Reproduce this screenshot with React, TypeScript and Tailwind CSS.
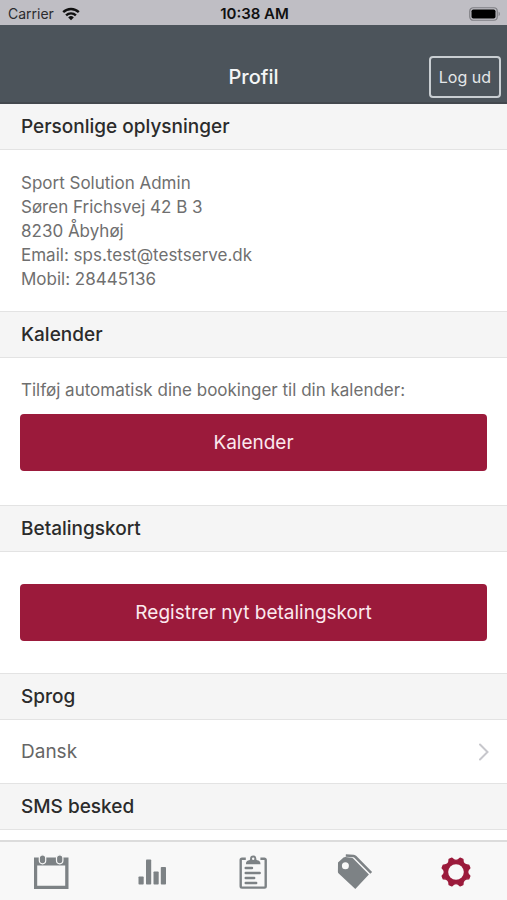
import type { ReactNode } from "react";

const toothTips = Array.from({ length: 8 }, (_, i) => 22.5 + i * 45);

function polar(radius: number, degrees: number) {
  const a = (degrees * Math.PI) / 180;
  return `${(16 + radius * Math.cos(a)).toFixed(2)} ${(16 + radius * Math.sin(a)).toFixed(2)}`;
}

const gearOutline =
  toothTips
    .map((t, i) => `${i === 0 ? "M" : "L"}${polar(14.4, t - 6)}L${polar(14.4, t + 6)}Q${polar(9.4, t + 22.5)} ${polar(14.4, t + 39)}`)
    .join("") + "Z";

function WifiIcon() {
  return (
    <svg width="18" height="14" viewBox="0 0 18 14" fill="none" stroke="#111" strokeWidth="2.4" aria-hidden="true">
      <path d="M1.2 5.2a11.2 11.2 0 0 1 15.6 0" />
      <path d="M4.1 8.4a7 7 0 0 1 9.8 0" />
      <path d="M9 13.2 6.2 10.4a4 4 0 0 1 5.6 0Z" fill="#111" stroke="none" />
    </svg>
  );
}

function BatteryIcon() {
  return (
    <svg width="32" height="14" viewBox="0 0 32 14" aria-hidden="true">
      <rect x="0.75" y="0.75" width="27.5" height="12.5" rx="3.5" fill="none" stroke="#7f7f84" strokeWidth="1.2" />
      <rect x="2.5" y="2.4" width="24" height="9.2" rx="1.8" fill="#000" />
      <path d="M29.6 4.8c1.6.5 1.6 3.9 0 4.4Z" fill="#7f7f84" />
    </svg>
  );
}

function CalendarIcon() {
  return (
    <svg width="36" height="36" viewBox="0 0 36 36" aria-hidden="true">
      <path fillRule="evenodd" d="M1 3.5h34.5v31.5H1ZM4.2 11.500v20.300h28V11.500Z" fill="#7d8285" />
      <rect x="6.3" y="0.8" width="6.4" height="9" rx="3.2" fill="#7d8285" stroke="#f8f8f8" strokeWidth="1.2" />
      <rect x="23.5" y="0.8" width="6.4" height="9" rx="3.2" fill="#7d8285" stroke="#f8f8f8" strokeWidth="1.2" />
    </svg>
  );
}

function BarsIcon() {
  return (
    <svg width="36" height="36" viewBox="0 0 36 36" fill="#7d8285" aria-hidden="true">
      <rect x="4.5" y="22.5" width="5.2" height="8" rx="0.8" />
      <rect x="12" y="5.5" width="5.2" height="25" rx="0.8" />
      <rect x="19.5" y="17.5" width="5.2" height="13" rx="0.8" />
      <rect x="26.8" y="13" width="5.2" height="17.5" rx="0.8" />
    </svg>
  );
}

function ClipboardIcon() {
  return (
    <svg width="36" height="36" viewBox="0 0 36 36" fill="none" stroke="#7d8285" aria-hidden="true">
      <path d="M10.800 4.800H7a1.300 1.300 0 0 0-1.300 1.300V32.300a1.300 1.300 0 0 0 1.300 1.300h22.400a1.300 1.300 0 0 0 1.300-1.300V6.100a1.300 1.300 0 0 0-1.300-1.300H25.400" strokeWidth="2.400" />
      <path fillRule="evenodd" d="M10.900 10.200c0-2.900 1.600-3.500 3.200-3.900.8-.2 1-.9 1-1.800a3.100 3.100 0 0 1 6.200 0c0 .9.200 1.600 1 1.800 1.600.4 3.200 1 3.200 3.900ZM18.200 3.600a1.200 1.200 0 1 0 0 2.400 1.200 1.200 0 0 0 0-2.400Z" fill="#7d8285" stroke="none" />
      <path d="M10.700 14h6.300M10.700 19h14M10.700 24h8.500M10.700 29h10.500" strokeWidth="2.400" strokeLinecap="round" />
    </svg>
  );
}

function TagsIcon() {
  return (
    <svg width="36" height="36" viewBox="0 0 36 36" aria-hidden="true">
      <path fillRule="evenodd" d="M1 8.500 6.500 3.600Q7.300 3 8.300 3L14.500 3.700Q15.600 3.900 16.400 4.700L31.900 20.600 18.300 35 1.700 19.600Q.9 18.800.9 17.800ZM8.400 8.300a3.500 3.500 0 1 0 0 7 3.500 3.500 0 0 0 0-7Z" fill="#7d8285" />
      <path d="M8.800 1.400 16.600 2Q17.700 2.200 18.500 3L34.200 18.800" fill="none" stroke="#7d8285" strokeWidth="2.500" />
    </svg>
  );
}

function GearIcon() {
  return (
    <svg width="32" height="32" viewBox="0 0 32 32" aria-hidden="true">
      <path d={gearOutline} fill="#9b1a3b" stroke="#9b1a3b" strokeWidth="1.4" strokeLinejoin="round" />
      <circle cx="16" cy="16" r="7.8" fill="#f8f8f8" />
    </svg>
  );
}

function Section({ title, children }: { title: string; children?: ReactNode }) {
  return (
    <section className="border-t border-[#e3e3e3] first:border-t-0">
      <h2 className="flex h-[46px] items-center border-b border-[#e3e3e3] bg-[#f5f5f5] px-[21px] text-[19px] leading-6 font-medium text-[#2b2b2b]">
        {title}
      </h2>
      {children}
    </section>
  );
}

function PrimaryButton({ children }: { children: ReactNode }) {
  return (
    <button type="button" className="block h-[57px] w-full rounded bg-[#9b1a3b] text-[19px] leading-6 text-[#fbe9ee]">
      {children}
    </button>
  );
}

const tabs = [
  { label: "Kalender", icon: <CalendarIcon /> },
  { label: "Statistik", icon: <BarsIcon /> },
  { label: "Bookinger", icon: <ClipboardIcon /> },
  { label: "Tilbud", icon: <TagsIcon /> },
  { label: "Profil", icon: <GearIcon /> },
];

export default function App() {
  return (
    <div className="flex h-screen flex-col bg-white font-['Inter','Liberation_Sans',sans-serif] text-[#6f6f6f]">
      <div className="grid h-[25px] shrink-0 grid-cols-[1fr_auto_1fr] items-center bg-[#bfbec4] pt-0.5 pr-1.5 pl-2 text-sm leading-5 text-[#2b2b2e]">
        <div className="flex items-center gap-2">
          <span>Carrier</span>
          <WifiIcon />
        </div>
        <time className="text-[15px] font-semibold text-[#111]">10:38 AM</time>
        <div className="flex justify-end">
          <BatteryIcon />
        </div>
      </div>

      <header className="grid h-[79px] shrink-0 grid-cols-[1fr_auto_1fr] items-center border-b-2 border-[#43484e] bg-[#4c545b] px-1.5 pt-[26px]">
        <h1 className="col-start-2 text-xl leading-6 font-medium text-[#f4f6f7]">Profil</h1>
        <button type="button" className="h-[42px] justify-self-end rounded border-2 border-[#c9ced2] px-2 text-base leading-5 text-[#e4e7e9]">
          Log ud
        </button>
      </header>

      <main className="min-h-0 flex-1 overflow-hidden">
        <Section title="Personlige oplysninger">
          <address className="px-[21px] pt-[21px] pb-5 text-[17px] leading-6 not-italic">
            <p>Sport Solution Admin</p>
            <p>Søren Frichsvej 42 B 3</p>
            <p>8230 Åbyhøj</p>
            <p>Email: sps.test@testserve.dk</p>
            <p>Mobil: 28445136</p>
          </address>
        </Section>

        <Section title="Kalender">
          <div className="px-5 pt-5 pb-[34px]">
            <p className="mb-3 px-px text-[17px] leading-6">Tilføj automatisk dine bookinger til din kalender:</p>
            <PrimaryButton>Kalender</PrimaryButton>
          </div>
        </Section>

        <Section title="Betalingskort">
          <div className="px-5 py-8">
            <PrimaryButton>Registrer nyt betalingskort</PrimaryButton>
          </div>
        </Section>

        <Section title="Sprog">
          <button type="button" className="flex h-[63px] w-full items-center justify-between pr-[18px] pl-[21px] text-left text-[19px] leading-6 text-[#666]">
            Dansk
            <svg width="10" height="18" viewBox="0 0 10 18" fill="none" stroke="#c7c7cc" strokeWidth="2" strokeLinecap="round" aria-hidden="true">
              <path d="m1 1.500 7.500 7.500L1 16.500" />
            </svg>
          </button>
        </Section>

        <Section title="SMS besked" />
      </main>

      <nav className="grid h-[60px] shrink-0 grid-cols-5 border-t-2 border-[#dcdcdc] bg-[#f8f8f8] pt-0.5">
        {tabs.map((tab) => (
          <button key={tab.label} type="button" aria-label={tab.label} className="flex items-center justify-center">
            {tab.icon}
          </button>
        ))}
      </nav>
    </div>
  );
}
